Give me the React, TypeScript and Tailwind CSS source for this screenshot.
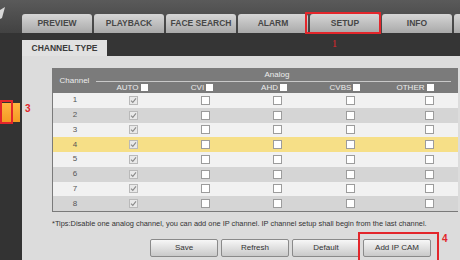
import React from 'react'

const tabs = ['PREVIEW', 'PLAYBACK', 'FACE SEARCH', 'ALARM', 'SETUP', 'INFO', '']
const cols = [
  { key: 'AUTO', w: 'w-[74px]', hp: 'pr-[2px]' },
  { key: 'CVI', w: 'w-[70px]', hp: 'pr-[6px]' },
  { key: 'AHD', w: 'w-[74px]', hp: 'pr-[6px]' },
  { key: 'CVBS', w: 'w-[72px]', hp: 'pr-[10px]' },
  { key: 'OTHER', w: 'w-[72px]', hp: 'pr-[14px]' },
]
const rows = [1, 2, 3, 4, 5, 6, 7, 8]
const buttons = ['Save', 'Refresh', 'Default', 'Add IP CAM']

const EmptyBox: React.FC = () => (
  <span className="block w-[9px] h-[9px] bg-white border border-[#9c9c9c]" />
)

const CheckedBox: React.FC = () => (
  <span className="flex items-center justify-center w-[9px] h-[9px] bg-[#e9e9e9] border border-[#b9b9b9]">
    <svg width="7" height="7" viewBox="0 0 7 7">
      <path d="M1 3.6 L2.8 5.4 L6 1.4" fill="none" stroke="#8a8a8a" strokeWidth="1.1" />
    </svg>
  </span>
)

const App: React.FC = () => {
  return (
    <div className="relative w-[460px] h-[260px] overflow-hidden bg-[#333] font-['Liberation_Sans',Arial,sans-serif]">
      {/* top tabs */}
      <div className="relative h-[33px] bg-gradient-to-b from-[#5a5a5a] to-[#424242] flex items-end pl-[22px] gap-[2px]">
        <svg className="absolute left-0 top-[7px]" width="6" height="12" viewBox="0 0 6 12">
          <path d="M0 3 L5 0 L2 11 L0 12 Z" fill="#d8d8d8" />
        </svg>
        {tabs.map((t, i) => (
          <div
            key={i}
            className="shrink-0 w-[70px] h-[19px] rounded-t-[3px] bg-gradient-to-b from-[#d6d6d6] to-[#a9a9a9] flex items-center justify-center text-[8.5px] font-bold text-[#474747]"
          >
            {t}
          </div>
        ))}
      </div>

      <div className="flex h-[227px]">
        {/* sidebar */}
        <div className="w-[22px] shrink-0 bg-[#333] pt-[70px]">
          <div className="w-[20px] h-[19px] bg-gradient-to-b from-[#ffb540] to-[#f59a22]" />
        </div>

        {/* main */}
        <div className="flex-1 flex flex-col">
          <div className="h-[23px] pt-[7px] bg-[#353535]">
            <div className="w-[85px] h-[16px] bg-[#e1e1e1] flex items-center justify-center text-[8.5px] font-bold text-[#3a3a3a]">
              CHANNEL TYPE
            </div>
          </div>

          <div className="flex-1 bg-[#dcdcdc] pl-[30px] pt-[12px]">
            {/* table */}
            <div className="w-[406px] border-l border-b border-[#7a7a7a]">
              <div className="flex h-[25px] bg-[#7b7b7b] text-[8px] text-[#ececec]">
                <div className="w-[44px] flex items-center justify-center">Channel</div>
                <div className="flex-1 flex flex-col">
                  <div className="h-[13px] flex items-center justify-center pt-[1px]">Analog</div>
                  <div className="mr-[7px] border-t border-[#c9c9c9]" />
                  <div className="flex h-[11px] items-center">
                    {cols.map((c) => (
                      <div key={c.key} className={`${c.w} ${c.hp} flex items-center justify-center gap-[2px]`}>
                        <span>{c.key}</span>
                        <span className="block w-[7px] h-[7px] bg-white" />
                      </div>
                    ))}
                  </div>
                </div>
              </div>
              {rows.map((r) => {
                const bg = r === 4 ? 'bg-[#f6df87]' : r % 2 === 0 ? 'bg-[#d5d5d5]' : 'bg-[#f1f1f1]'
                return (
                  <div key={r} className={`flex h-[14.75px] items-center ${bg} text-[8px] text-[#555]`}>
                    <div className="w-[44px] text-center">{r}</div>
                    {cols.map((c, i) => (
                      <div
                        key={c.key}
                        className={`${c.w} flex items-center justify-center ${i === 4 ? 'pl-[14px] pr-0' : ''}`}
                      >
                        {i === 0 ? <CheckedBox /> : <EmptyBox />}
                      </div>
                    ))}
                  </div>
                )
              })}
            </div>

            <div className="mt-[7px] text-[7.4px] leading-[9px] text-[#333] whitespace-nowrap">
              *Tips:Disable one analog channel, you can add one IP channel. IP channel setup shall begin from the last channel.
            </div>

            <div className="mt-[11px] ml-[98px] flex gap-[3px]">
              {buttons.map((b) => (
                <div
                  key={b}
                  className="w-[68px] h-[18px] border border-[#8a8a8a] rounded-[2px] bg-gradient-to-b from-[#f7f7f7] to-[#c9c9c9] flex items-center justify-center text-[8px] text-[#333]"
                >
                  {b}
                </div>
              ))}
            </div>
          </div>
        </div>
      </div>

      {/* annotations */}
      <div className="absolute left-[305px] top-[12px] w-[76px] h-[22px] border-2 border-[#e3262b]" />
      <div className="absolute left-[332px] top-[38px] text-[10px] leading-[11px] font-['Liberation_Serif',serif] text-[#e3262b]">1</div>
      <div className="absolute left-0 top-[100px] w-[13px] h-[24px] border-2 border-[#e3262b]" />
      <div className="absolute left-[25px] top-[103px] text-[10px] leading-[11px] font-bold text-[#e3262b]">3</div>
      <div className="absolute left-[358px] top-[232px] w-[81px] h-[30px] border-2 border-[#e3262b]" />
      <div className="absolute left-[442px] top-[233px] text-[10px] leading-[11px] font-bold text-[#e3262b]">4</div>
    </div>
  )
}

export default App
